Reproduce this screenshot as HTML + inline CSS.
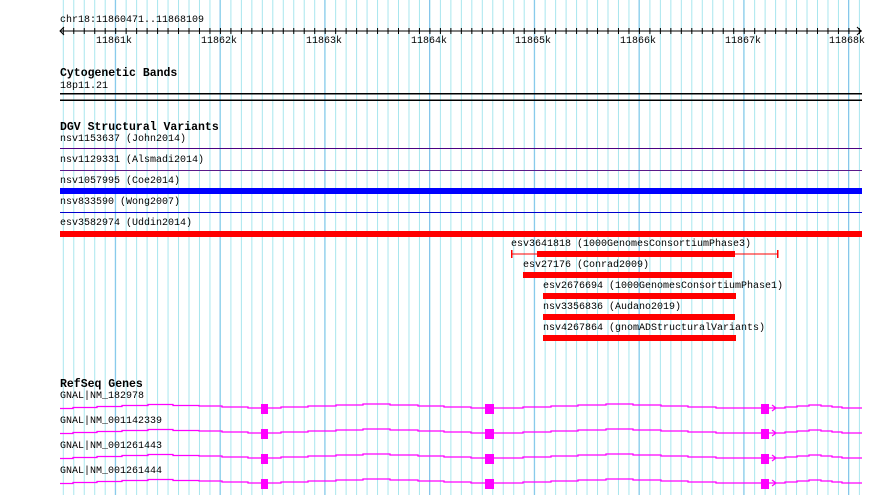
<!DOCTYPE html>
<html><head><meta charset="utf-8"><style>
html,body{margin:0;padding:0;background:#fff;}
body{width:890px;height:495px;position:relative;overflow:hidden;font-family:"Liberation Mono","DejaVu Sans Mono",monospace;font-size:10px;color:#000;}
.t{position:absolute;white-space:pre;line-height:11px;}
.b{font-weight:bold;font-size:11.5px;}
svg{position:absolute;left:0;top:0;}
</style></head><body>
<svg width="890" height="495" viewBox="0 0 890 495">
<defs>
<pattern id="minor" x="62.8" y="0" width="10.475" height="495" patternUnits="userSpaceOnUse">
<rect x="0" y="0" width="1" height="495" fill="#a8e6ee"/>
</pattern>
<pattern id="major" x="114.8" y="0" width="104.75" height="495" patternUnits="userSpaceOnUse">
<rect x="0" y="0" width="1" height="495" fill="#80c4ea"/>
</pattern>
<pattern id="tick" x="62.8" y="0" width="10.475" height="495" patternUnits="userSpaceOnUse">
<rect x="0" y="28" width="1" height="6" fill="#000"/>
</pattern>
<g id="gene">
<path d="M60 408.5 H73 V407.5 H97 V406.5 H122 V405.5 H148 V404.5 H173 V405.5 H199 V406 H222 V407 H248 V408 H281 V407 H308 V406 H336 V405 H363 V404 H390 V405 H418 V406 H444 V407 H471 V408 H523 V407 H551 V406 H578 V405 H606 V404 H633 V405 H661 V406 H688 V407 H716 V408 H785 V407 H797 V406 H809 V405 H821 V406 H832 V407 H842 V408 H862" fill="none" stroke="#ff00ff" stroke-width="1.3"/>
<rect x="261" y="404" width="7" height="10" fill="#ff00ff"/>
<rect x="485" y="404" width="9" height="10" fill="#ff00ff"/>
<rect x="761" y="404" width="8" height="10" fill="#ff00ff"/>
<path d="M772 405 L776 408 L772 411" fill="none" stroke="#ff00ff" stroke-width="1.2"/>
</g>
</defs>
<rect x="60" y="0" width="802" height="495" fill="url(#minor)"/>
<rect x="60" y="0" width="802" height="495" fill="url(#major)"/>
<!-- axis -->
<rect x="60" y="30.5" width="802" height="1" fill="#000"/>
<rect x="60" y="0" width="802" height="495" fill="url(#tick)"/>
<path d="M64 27 L60 31 L64 35 M857 27 L861 31 L857 35" fill="none" stroke="#000" stroke-width="1"/>
<!-- cyto -->
<rect x="60" y="93" width="802" height="1.5" fill="#000"/>
<rect x="60" y="99.5" width="802" height="1.5" fill="#000"/>
<!-- DGV -->
<rect x="60" y="148" width="802" height="1" fill="#4b0082"/>
<rect x="60" y="170" width="802" height="1" fill="#5a1a8a"/>
<rect x="60" y="188" width="802" height="6" fill="#0000ff"/>
<rect x="60" y="212" width="802" height="1" fill="#0000cc"/>
<rect x="60" y="231" width="802" height="6" fill="#ff0000"/>
<rect x="511" y="253.5" width="267" height="1" fill="#ff0000"/>
<rect x="511" y="250" width="1.5" height="8" fill="#ff0000"/>
<rect x="777" y="250" width="1.5" height="8" fill="#ff0000"/>
<rect x="537" y="251" width="198" height="6" fill="#ff0000"/>
<rect x="523" y="272" width="209" height="6" fill="#ff0000"/>
<rect x="543" y="293" width="193" height="6" fill="#ff0000"/>
<rect x="543" y="314" width="192" height="6" fill="#ff0000"/>
<rect x="543" y="335" width="193" height="6" fill="#ff0000"/>
<use href="#gene"/>
<use href="#gene" transform="translate(0,25)"/>
<use href="#gene" transform="translate(0,50)"/>
<use href="#gene" transform="translate(0,75)"/>
</svg>
<div class="t" style="left:60px;top:15px">chr18:11860471..11868109</div>
<div class="t" style="left:96px;top:36px">11861k</div>
<div class="t" style="left:201px;top:36px">11862k</div>
<div class="t" style="left:306px;top:36px">11863k</div>
<div class="t" style="left:411px;top:36px">11864k</div>
<div class="t" style="left:515px;top:36px">11865k</div>
<div class="t" style="left:620px;top:36px">11866k</div>
<div class="t" style="left:725px;top:36px">11867k</div>
<div class="t" style="left:829px;top:36px">11868k</div>
<div class="t b" style="left:60px;top:68px">Cytogenetic Bands</div>
<div class="t" style="left:60px;top:81px">18p11.21</div>
<div class="t b" style="left:60px;top:122px">DGV Structural Variants</div>
<div class="t" style="left:60px;top:134px">nsv1153637 (John2014)</div>
<div class="t" style="left:60px;top:155px">nsv1129331 (Alsmadi2014)</div>
<div class="t" style="left:60px;top:176px">nsv1057995 (Coe2014)</div>
<div class="t" style="left:60px;top:197px">nsv833590 (Wong2007)</div>
<div class="t" style="left:60px;top:218px">esv3582974 (Uddin2014)</div>
<div class="t" style="left:511px;top:239px">esv3641818 (1000GenomesConsortiumPhase3)</div>
<div class="t" style="left:523px;top:260px">esv27176 (Conrad2009)</div>
<div class="t" style="left:543px;top:281px">esv2676694 (1000GenomesConsortiumPhase1)</div>
<div class="t" style="left:543px;top:302px">nsv3356836 (Audano2019)</div>
<div class="t" style="left:543px;top:323px">nsv4267864 (gnomADStructuralVariants)</div>
<div class="t b" style="left:60px;top:379px">RefSeq Genes</div>
<div class="t" style="left:60px;top:391px">GNAL|NM_182978</div>
<div class="t" style="left:60px;top:416px">GNAL|NM_001142339</div>
<div class="t" style="left:60px;top:441px">GNAL|NM_001261443</div>
<div class="t" style="left:60px;top:466px">GNAL|NM_001261444</div>
</body></html>
